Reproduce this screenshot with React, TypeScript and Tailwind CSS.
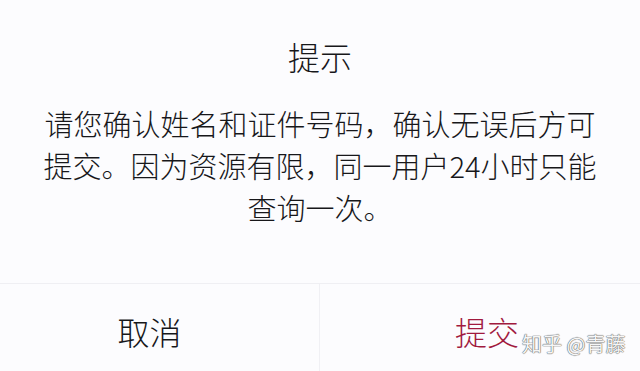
export default function App() {
  return (
    <div className="relative w-[640px] h-[371px] overflow-hidden bg-[#fcfcfe] text-[#17171a] font-light font-['Noto_Sans_CJK_SC','Noto_Sans_CJK_JP',sans-serif]">
      <div className="pt-[33px] text-center text-[32px] leading-[46px]">提示</div>
      <div className="mt-[23px] text-center text-[29px] leading-[42px]">
        <div>请您确认姓名和证件号码，确认无误后方可</div>
        <div>提交。因为资源有限，同一用户24小时只能</div>
        <div>查询一次。</div>
      </div>
      <div className="mt-[55px] flex h-[88px] border-t border-[#efeff3]">
        <div className="flex w-[320px] items-center justify-center border-r border-[#f0f0f4] pr-[20px] pt-[6px] text-[32px]">
          取消
        </div>
        <div className="flex flex-1 items-center justify-center pl-[14px] pt-[6px] text-[32px] text-[#a11a3e]">
          提交
        </div>
      </div>
      <div className="absolute left-[522px] top-[331px] text-[20px] leading-[25px] font-normal text-[#f6f6f6] [text-shadow:0_0_1px_#666,0_0_1px_#666,0_0_1px_#888]">
        知乎 @青藤
      </div>
    </div>
  );
}
